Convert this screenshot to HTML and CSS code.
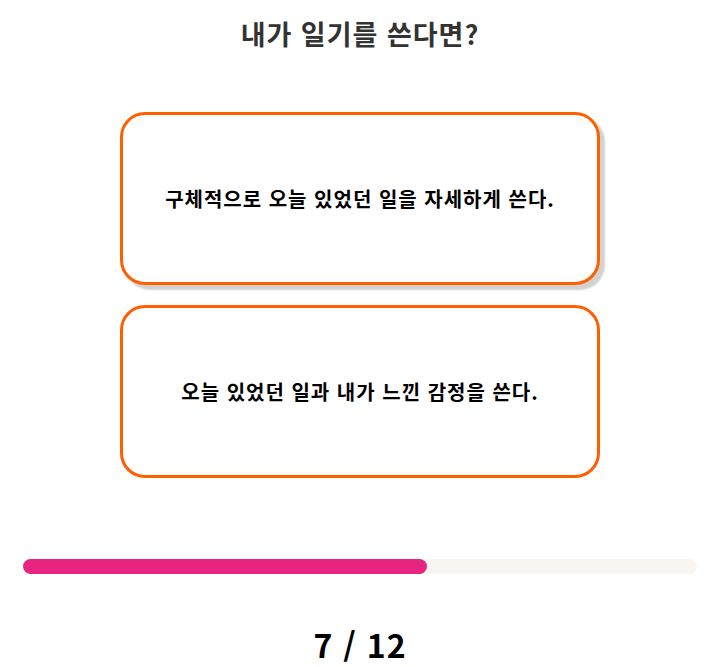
FILE: index.html
```html
<!DOCTYPE html>
<html lang="ko">
<head>
  <meta charset="UTF-8">
  <title>질문</title>
  <link rel="stylesheet" href="styles.css">
</head>
<body>
  <div class="page">
    <h1 class="question">내가 일기를 쓴다면?</h1>

    <div class="answers">
      <button class="answer answer-hover">구체적으로 오늘 있었던 일을 자세하게 쓴다.</button>
      <button class="answer">오늘 있었던 일과 내가 느낀 감정을 쓴다.</button>
    </div>

    <div class="progress">
      <div class="progress-fill" style="width: 60%;"></div>
    </div>

    <div class="counter">7 / 12</div>
  </div>
</body>
</html>
```

FILE: styles.css
```css
body {
  margin: 0;
  padding: 0;
  background: #fff;
  font-family: "Noto Sans CJK KR", "Noto Sans", sans-serif;
}
.page {
  width: 720px;
  display: flex;
  flex-direction: column;
  align-items: center;
}
.question {
  margin: 16px 0 0 0;
  font-size: 27px;
  line-height: 36px;
  letter-spacing: 1px;
  font-weight: bold;
  color: #333;
}
.answers {
  margin-top: 60px;
  display: flex;
  flex-direction: column;
  gap: 20px;
}
.answer {
  width: 480px;
  height: 173px;
  box-sizing: border-box;
  border: 3px solid #ff5f00;
  border-radius: 25px;
  background: #fff;
  font-family: inherit;
  font-size: 20px;
  letter-spacing: 1px;
  font-weight: bold;
  color: #000;
  cursor: pointer;
}
.answer-hover {
  box-shadow: 5px 5px 2px rgba(0,0,0,0.18);
}
.progress {
  margin-top: 81px;
  width: 674px;
  height: 15px;
  border-radius: 8px;
  background: #f9f6f2;
}
.progress-fill {
  height: 100%;
  border-radius: 8px;
  background: #e72580;
}
.counter {
  margin-top: 50px;
  font-size: 32px;
  line-height: 40px;
  letter-spacing: 1px;
  font-weight: bold;
  color: #000;
}
```
